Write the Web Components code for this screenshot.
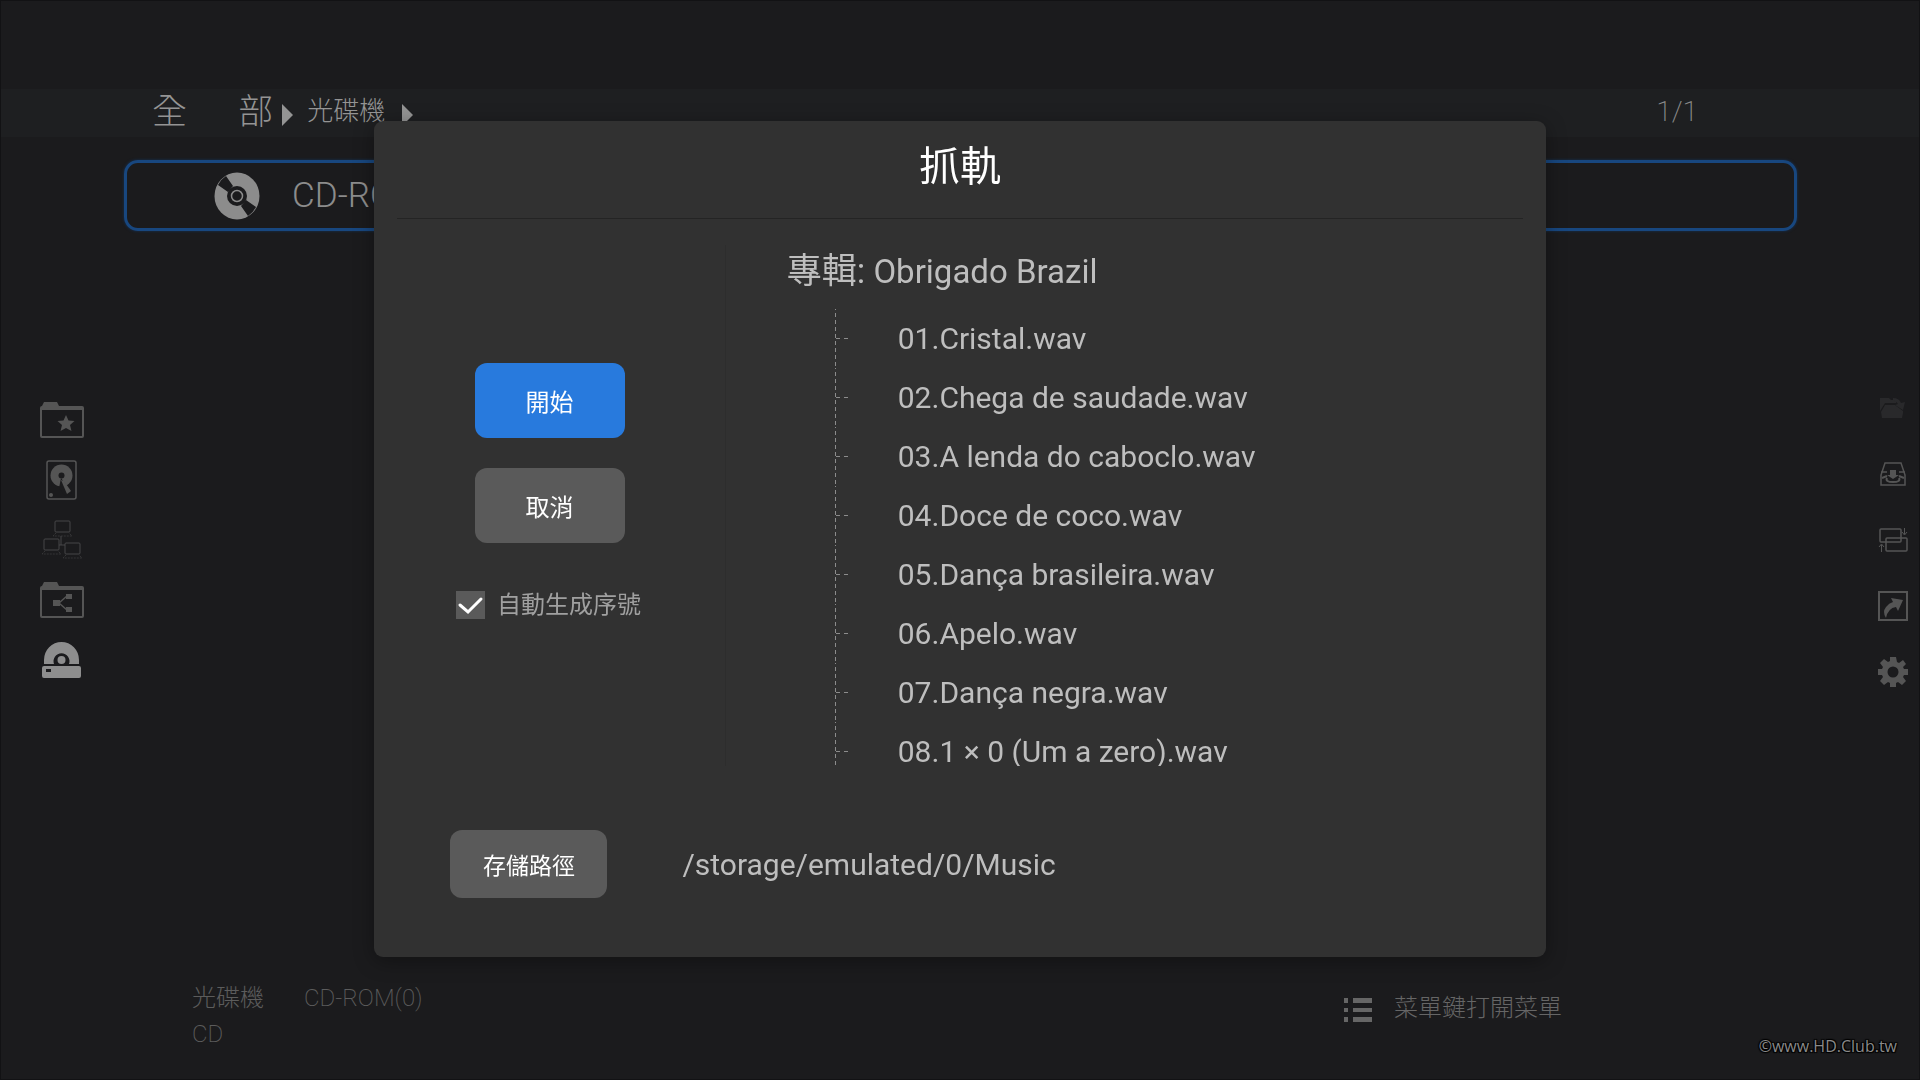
<!DOCTYPE html>
<html lang="zh-Hant">
<head>
<meta charset="utf-8">
<title>抓軌</title>
<style>
	html, body { margin: 0; }
	body {
		background: #1b1b1d;
		color: #8c8c8c;
		font-family: Roboto, "Noto Sans CJK TC", sans-serif;
		font-weight: 300;
	}
</style>
</head>
<body>
<media-browser>
	<crumb-bar slot="head" count="1/1">
		<crumb-link large>全      部</crumb-link>
		<crumb-link>光碟機</crumb-link>
	</crumb-bar>
	<icon-rail slot="left" label="來源">
		<rail-button icon="favorites" label="收藏"></rail-button>
		<rail-button icon="disk" label="硬碟"></rail-button>
		<rail-button icon="network" label="網路" tone="low"></rail-button>
		<rail-button icon="share" label="分享"></rail-button>
		<rail-button icon="optical" label="光碟機" tone="on"></rail-button>
	</icon-rail>
	<disc-row>CD-ROM(0)</disc-row>
	<icon-rail slot="right" side="right" label="操作">
		<rail-button icon="open" label="開啟" tone="off"></rail-button>
		<rail-button icon="inbox" label="存入"></rail-button>
		<rail-button icon="swap" label="切換"></rail-button>
		<rail-button icon="jump" label="前往"></rail-button>
		<rail-button icon="gear" label="設定"></rail-button>
	</icon-rail>
	<status-bar slot="foot">
		<span slot="source">光碟機</span>
		<span slot="name">CD-ROM(0)</span>
		<span slot="type">CD</span>
		<span slot="hint">菜單鍵打開菜單</span>
		<span slot="mark">©www.HD.Club.tw</span>
	</status-bar>
</media-browser>

<rip-dialog heading="抓軌">
	<push-button slot="actions" kind="primary">開始</push-button>
	<push-button slot="actions">取消</push-button>
	<check-field slot="actions" checked>自動生成序號</check-field>
	<track-list label="專輯:" album="Obrigado Brazil">
		<track-item>01.Cristal.wav</track-item>
		<track-item>02.Chega de saudade.wav</track-item>
		<track-item>03.A lenda do caboclo.wav</track-item>
		<track-item>04.Doce de coco.wav</track-item>
		<track-item>05.Dança brasileira.wav</track-item>
		<track-item>06.Apelo.wav</track-item>
		<track-item>07.Dança negra.wav</track-item>
		<track-item>08.1 × 0 (Um a zero).wav</track-item>
	</track-list>
	<push-button slot="path" kind="wide">存儲路徑</push-button>
	<span slot="path">/storage/emulated/0/Music</span>
</rip-dialog>

<script>
const svg = (w, h, body) =>
	`<svg width="${w}" height="${h}" viewBox="0 0 ${w} ${h}" fill="currentColor" aria-hidden="true">${body}</svg>`;

const FOLDER = `<path fill-rule="evenodd" d="M0 6Q0 4 2 4L4 0H17L19 4H42Q44 4 44 6V34Q44 36 42 36H2Q0 36 0 34ZM2 8V34H42V8Z"/>`;
const PC = (x, y) => `<g transform="translate(${x} ${y})" fill="none" stroke="currentColor">
	<rect x="3" y="1" width="15" height="11" rx="1"/>
	<path d="M4 13L1 16H20L17 13" stroke-dasharray="2 1" opacity=".6"/></g>`;

const ICONS = {
	favorites: svg(44, 36, FOLDER + `<path d="M26 13L28.5 18.5L34.5 19L30 23L31.5 29L26 26L20.5 29L22 23L17.5 19L23.5 18.5Z"/>`),
	disk: svg(32, 40, `
		<rect x="1" y="1" width="29" height="38" rx="2" fill="none" stroke="currentColor" stroke-width="1.5"/>
		<circle cx="15.5" cy="15.500" r="11"/>
		<path d="M15 18L26 33L19 36L13 28Z" fill="#1b1b1d"/>
		<circle cx="15.500" cy="15.500" r="3" fill="#1b1b1d"/>
		<path d="M15 20L18 21L25 31L21 34Z"/>
		<circle cx="5" cy="35" r="2"/>`),
	network: svg(42, 40, PC(11, 0) + PC(0, 18) + PC(21, 22) +
		`<path d="M20 16V25M18 25H24" fill="none" stroke="currentColor"/>`),
	share: svg(44, 36, FOLDER + `
		<path d="M13 18H20V24H13ZM26 12H32V17H26ZM26 25H32V30H26Z"/>
		<path d="M27 14L19 21L27 28" fill="none" stroke="currentColor" stroke-width="1.5"/>`),
	optical: svg(40, 38, `
		<path fill-rule="evenodd" d="M2 23V19A17.5 18 0 0 1 37 19V23H27A8 8 0 1 0 12 23Z"/>
		<circle cx="19.5" cy="19" r="4"/>
		<path fill-rule="evenodd" d="M2 25H37Q39 25 39 27V35Q39 37 37 37H2Q0 37 0 35V27Q0 25 2 25ZM4 28V31H9V28Z"/>`),
	open: svg(30, 22, `
		<path d="M2 1H11L13 3H18V6H7L2 14Z"/>
		<path d="M4 21L3 15L7 8H17L25 14V16L24 21Z"/>
		<path d="M15 1Q21 1 23 6L27 5L25 13L17 8L20 7Q18 4 15 3Z"/>`),
	inbox: svg(30, 24, `
		<path d="M7 1H23L27 13V23H3V13ZM3 10H9M21 10H27" fill="none" stroke="currentColor" stroke-width="1.5"/>
		<path d="M12 8H18V13H21L15 17L9 13H12Z"/>
		<path d="M4 16L9 14M26 16L21 14M9 16Q7 20 15 20Q23 20 21 16" fill="none" stroke="currentColor" stroke-width="2"/>`),
	swap: svg(30, 26, `
		<rect x="2" y="2" width="21" height="13" rx="1" fill="none" stroke="currentColor" stroke-width="1.5"/>
		<rect x="8" y="11" width="21" height="13" rx="1" fill="none" stroke="currentColor" stroke-width="1.5"/>
		<path d="M26.5 1V7M24 5L26.5 8L29 5M3.5 25V18M1 20L3.5 17L6 20" fill="none" stroke="currentColor"/>`),
	jump: svg(30, 30, `
		<rect x="1" y="1" width="28" height="28" fill="none" stroke="currentColor" stroke-width="2"/>
		<path d="M8 27Q4 21 8 16Q11 12 15 11L13 7L25 9L20 20L18 16Q10 17 8 27Z"/>`),
	gear: svg(30, 30, `
		<path fill-rule="evenodd" d="M12 0H18L19 5L21 6L25 3L28 7L25 10L26 12H30V18H26L25 20L28 24L24 28L20 25L18 26V30H12V26L10 25L6 28L2 24L5 20L4 18H0V12H4L5 10L2 6L6 2L10 5L12 4ZM15 9.5A5.5 5.5 0 1 0 15 20.5A5.5 5.5 0 1 0 15 9.5Z"/>`),
	disc: svg(46, 48, `
		<ellipse cx="23" cy="24" rx="22.5" ry="23.5"/>
		<path d="M4 13L14 20L19 14L12 4A22 23 0 0 0 4 13ZM42 35L32 28L27 34L34 44A22 23 0 0 0 42 35Z" fill="#1b1b1d"/>
		<circle cx="23" cy="24" r="10" fill="#1b1b1d"/>
		<circle cx="23" cy="24" r="5.5" fill="none" stroke="currentColor" stroke-width="1.5"/>`),
	menu: svg(28, 24, `<path d="M0 0H4V5H0ZM9 0H28V5H9ZM0 10H4V14H0ZM9 10H28V14H9ZM0 19H4V24H0ZM9 19H28V24H9Z"/>`),
	arrow: svg(11, 22, `<path d="M0 0L11 11L0 22Z"/>`),
	check: svg(29, 28, `<path d="M4 14L12 21L25 8" fill="none" stroke="#fff" stroke-width="3" stroke-linecap="round"/>`)
};

class BaseElement extends HTMLElement {
	constructor() {
		super();
		this.attachShadow({ mode: 'open' });
	}
	connectedCallback() {
		this.shadowRoot.innerHTML = this.render();
	}
	attr(name) { return this.getAttribute(name) || ''; }
}

class MediaBrowser extends BaseElement {
	render() {
		return `
			<style>
				:host {
					display: grid;
					grid-template-rows: auto 1fr auto;
					box-sizing: border-box;
					min-height: 100vh;
					border: 1px solid #121214;
				}
				main {
					display: grid;
					grid-template-columns: 123px 1fr 122px;
				}
				.list { padding-top: 23px; }
			</style>
			<slot name="head"></slot>
			<main>
				<slot name="left"></slot>
				<div class="list"><slot></slot></div>
				<slot name="right"></slot>
			</main>
			<slot name="foot"></slot>
		`;
	}
}

class CrumbBar extends BaseElement {
	render() {
		return `
			<style>
				:host { display: block; padding-top: 88px; }
				header {
					display: flex;
					justify-content: space-between;
					height: 48px;
					padding: 0 221px 0 151px;
					background: #1e1f21;
				}
				nav { display: flex; align-items: flex-start; gap: 14px; }
				.count { font-size: 28px; font-weight: 200; line-height: 46px; }
			</style>
			<header>
				<nav><slot></slot></nav>
				<span class="count">${this.attr('count')}</span>
			</header>
		`;
	}
}

class CrumbLink extends BaseElement {
	render() {
		return `
			<style>
				:host { display: block; color: #949494; }
				a {
					display: flex;
					align-items: center;
					gap: 17px;
					color: inherit;
					font-size: 26px;
					line-height: 44px;
					text-decoration: none;
					white-space: pre;
				}
				svg { padding-top: 8px; }
				:host([large]) a { font-size: 35px; line-height: 48px; gap: 9px; }
				:host([large]) svg { padding-top: 4px; }
			</style>
			<a href="#"><slot></slot>${ICONS.arrow}</a>
		`;
	}
}

class IconRail extends BaseElement {
	render() {
		return `
			<style>
				:host { display: grid; }
				nav {
					display: flex;
					flex-direction: column;
					justify-content: center;
					align-items: center;
					gap: 20px;
					padding-right: 2px;
				}
				:host([side="right"]) nav {
					align-items: flex-end;
					gap: 26px;
					padding-right: 6px;
				}
			</style>
			<nav aria-label="${this.attr('label')}"><slot></slot></nav>
		`;
	}
}

class RailButton extends BaseElement {
	render() {
		return `
			<style>
				:host { display: block; color: #555; }
				:host([tone="low"]) { color: #474748; }
				:host([tone="off"]) { color: #29292b; }
				:host([tone="on"]) { color: #8e8e8e; }
				button {
					display: grid;
					place-items: center;
					min-width: 40px;
					height: 40px;
					padding: 0;
					border: 0;
					background: none;
					color: inherit;
				}
			</style>
			<button type="button" aria-label="${this.attr('label')}">${ICONS[this.attr('icon')]}</button>
		`;
	}
}

class DiscRow extends BaseElement {
	render() {
		return `
			<style>
				:host { display: block; }
				a {
					display: flex;
					align-items: center;
					gap: 32px;
					box-sizing: border-box;
					height: 71px;
					padding-left: 87px;
					border: 3px solid #18477f;
					border-radius: 14px;
					box-shadow: 0 0 3px #14335a;
					color: #8c8c8c;
					font-size: 35px;
					text-decoration: none;
				}
			</style>
			<a href="#">${ICONS.disc}<span><slot></slot></span></a>
		`;
	}
}

class StatusBar extends BaseElement {
	render() {
		return `
			<style>
				:host { display: block; color: #5c5c5c; font-size: 24px; line-height: 36px; }
				footer {
					display: grid;
					grid-template-columns: 1fr auto 335px;
					box-sizing: border-box;
					height: 136px;
					padding: 37px 22px 0 191px;
				}
				.name { display: flex; gap: 40px; }
				.latin { font-weight: 200; }
				button {
					display: flex;
					align-items: center;
					align-self: start;
					gap: 22px;
					padding: 10px 0 0;
					border: 0;
					background: none;
					color: #666;
					font: inherit;
				}
				svg { padding-top: 4px; }
				.mark {
					align-self: end;
					justify-self: end;
					padding-bottom: 22px;
					color: #8a8a8a;
					font: 400 16px "Open Sans", sans-serif;
					text-shadow: 1px 1px 1px #000, -1px -1px 1px #000, 1px -1px 1px #000, -1px 1px 1px #000;
				}
			</style>
			<footer>
				<div>
					<div class="name"><slot name="source"></slot><span class="latin"><slot name="name"></slot></span></div>
					<div class="latin"><slot name="type"></slot></div>
				</div>
				<button type="button">${ICONS.menu}<slot name="hint"></slot></button>
				<div class="mark"><slot name="mark"></slot></div>
			</footer>
		`;
	}
}

class RipDialog extends BaseElement {
	render() {
		return `
			<style>
				:host {
					position: fixed;
					inset: 0;
					display: grid;
					place-items: center;
					padding-bottom: 2px;
					color: #bebebe;
					font-weight: 400;
				}
				dialog {
					position: static;
					box-sizing: border-box;
					width: 61vw;
					margin: 0;
					padding: 0;
					border: 0;
					border-radius: 9px;
					background: #313131;
					box-shadow: 0 4px 20px rgba(0, 0, 0, .35);
					color: inherit;
				}
				h1 {
					margin: 0 23px;
					border-bottom: 1px solid #242424;
					color: #fff;
					font-size: 41px;
					font-weight: 400;
					line-height: 92px;
					padding-bottom: 5px;
					text-align: center;
				}
				.body {
					display: grid;
					grid-template-columns: 30% 1fr;
					padding-top: 26px;
				}
				.actions {
					display: flex;
					flex-direction: column;
					align-items: center;
					gap: 30px;
					padding-top: 118px;
					border-right: 1px solid #2d2d2d;
				}
				.path {
					display: flex;
					align-items: center;
					gap: 75px;
					padding: 64px 76px 59px;
					font-size: 30px;
				}
			</style>
			<dialog open aria-labelledby="title">
				<h1 id="title">${this.attr('heading')}</h1>
				<div class="body">
					<div class="actions"><slot name="actions"></slot></div>
					<slot></slot>
				</div>
				<div class="path"><slot name="path"></slot></div>
			</dialog>
		`;
	}
}

class PushButton extends BaseElement {
	render() {
		return `
			<style>
				:host { display: block; }
				button {
					width: 150px;
					height: 75px;
					padding: 0;
					border: 0;
					border-radius: 12px;
					background: #5a5a5a;
					color: #fff;
					font: inherit;
					font-size: 24px;
				}
				:host([kind="primary"]) button { background: #287add; }
				:host([kind="wide"]) button { width: 157px; height: 68px; font-size: 23px; }
			</style>
			<button type="button"><slot></slot></button>
		`;
	}
}

class CheckField extends BaseElement {
	render() {
		return `
			<style>
				:host { display: block; padding: 14px 2px 0 0; color: #a0a0a0; }
				label {
					display: flex;
					align-items: center;
					gap: 12px;
					font-size: 24px;
					line-height: 36px;
				}
				.box { display: grid; }
				input, svg { grid-area: 1 / 1; }
				input {
					appearance: none;
					width: 29px;
					height: 28px;
					margin: 0;
					background: #5a5a5a;
				}
				svg { pointer-events: none; }
				input:not(:checked) + svg { visibility: hidden; }
			</style>
			<label>
				<span class="box">
					<input type="checkbox" ${this.hasAttribute('checked') ? 'checked' : ''}>
					${ICONS.check}
				</span>
				<slot></slot>
			</label>
		`;
	}
}

class TrackList extends BaseElement {
	render() {
		return `
			<style>
				:host { display: block; padding-left: 61px; }
				h2 {
					margin: 0 0 10px;
					font-size: 33px;
					font-weight: 400;
					line-height: 54px;
				}
				.label { font-size: 35px; }
				.tracks {
					max-height: 457px;
					margin-left: 48px;
					overflow: hidden;
				}
			</style>
			<h2><span class="label">${this.attr('label')}</span> ${this.attr('album')}</h2>
			<div class="tracks" role="list"><slot></slot></div>
		`;
	}
}

class TrackItem extends BaseElement {
	connectedCallback() {
		super.connectedCallback();
		this.setAttribute('role', 'listitem');
	}
	render() {
		/* dashed trunk on the left, short dashed branch at mid height */
		return `
			<style>
				:host {
					display: block;
					height: 59px;
					padding-left: 63px;
					box-sizing: border-box;
					background:
						repeating-linear-gradient(to bottom, #8c8c8c 0 1px, transparent 1px 4px, #8c8c8c 4px 7px) 0 0 / 1px 100% no-repeat,
						repeating-linear-gradient(to right, #8c8c8c 0 4px, transparent 4px 8px) 1px 29px / 12px 1px no-repeat;
					font-size: 30px;
					line-height: 59px;
				}
			</style>
			<slot></slot>
		`;
	}
}

customElements.define('media-browser', MediaBrowser);
customElements.define('crumb-bar', CrumbBar);
customElements.define('crumb-link', CrumbLink);
customElements.define('icon-rail', IconRail);
customElements.define('rail-button', RailButton);
customElements.define('disc-row', DiscRow);
customElements.define('status-bar', StatusBar);
customElements.define('rip-dialog', RipDialog);
customElements.define('push-button', PushButton);
customElements.define('check-field', CheckField);
customElements.define('track-list', TrackList);
customElements.define('track-item', TrackItem);
</script>
</body>
</html>
